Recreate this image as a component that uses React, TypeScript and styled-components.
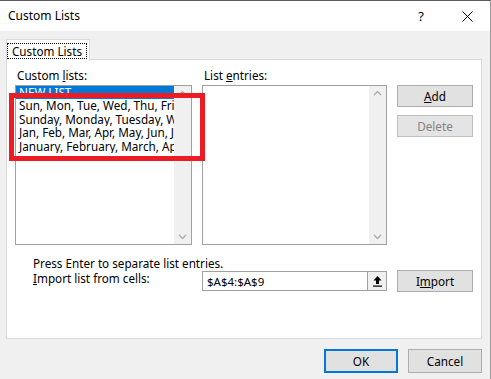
import styled, { createGlobalStyle } from "styled-components";

const Global = createGlobalStyle`
	html, body {
		margin: 0;
		padding: 0;
		background: #f0f0f0;
	}
	body {
		font-family: "Noto Sans", "Open Sans", sans-serif;
		font-size: 11.7px;
		color: #000;
	}
`;

const Window = styled.div`
	position: relative;
	width: 491px;
	height: 379px;
	box-sizing: border-box;
	border-top: 1px solid #5b5b5b;
	border-right: 1px solid #9a9a9a;
	background: #f0f0f0;
	display: flex;
	flex-direction: column;
	overflow: hidden;
`;

const TitleBar = styled.div`
	flex: 0 0 30px;
	background: #fff;
	display: flex;
	align-items: center;
	padding-left: 8px;
`;

const Title = styled.div`
	flex: 1;
	font-size: 12px;
	padding-bottom: 2px;
`;

const TitleButton = styled.div`
	width: 46px;
	height: 30px;
	display: flex;
	align-items: center;
	justify-content: center;
	font-size: 13px;
`;

const Body = styled.div`
	flex: 1;
	display: flex;
	flex-direction: column;
	padding: 7px 8px 0 6px;
`;

const TabStrip = styled.div`
	display: flex;
	height: 21px;
`;

const Tab = styled.div`
	width: 84px;
	box-sizing: border-box;
	background: #fff;
	border: 1px solid #d9d9d9;
	border-bottom: none;
	position: relative;
	top: 1px;
	height: 22px;
	display: flex;
	align-items: center;
	justify-content: center;
	white-space: nowrap;
`;

const FocusRect = styled.span`
	border: 1px dotted #000;
	padding: 0 4px;
	line-height: 14px;
	margin-right: 2px;
`;

const Panel = styled.div`
	height: 280px;
	box-sizing: border-box;
	background: #fff;
	border: 1px solid #d9d9d9;
	padding: 7px 0 0 8px;
	display: grid;
	grid-template-columns: 177px 185px 76px;
	grid-template-rows: 16px 160px 16px 22px;
	column-gap: 10px;
	row-gap: 2px;
	align-content: start;
`;

const Label = styled.div`
	line-height: 16px;
	padding-left: 2px;
	white-space: nowrap;
`;

const ListBox = styled.div`
	border: 1px solid #a0a0a0;
	display: flex;
	overflow: hidden;
`;

const ListItems = styled.div`
	flex: 1;
	min-width: 0;
	overflow: hidden;
`;

const ListItem = styled.div<{ $selected?: boolean }>`
	line-height: 13.4px;
	padding-left: 3px;
	white-space: nowrap;
	overflow: hidden;
	background: ${(p) => (p.$selected ? "#0078d7" : "transparent")};
	color: ${(p) => (p.$selected ? "#fff" : "#000")};
`;

const ScrollBar = styled.div`
	flex: 0 0 17px;
	background: #f0f0f0;
	display: flex;
	flex-direction: column;
	justify-content: space-between;
	align-items: center;
	padding: 4px 0;
`;

const ButtonColumn = styled.div`
	display: flex;
	flex-direction: column;
	gap: 8px;
`;

const Button = styled.div<{ $disabled?: boolean; $default?: boolean }>`
	box-sizing: border-box;
	height: ${(p) => (p.$default ? "24px" : "22px")};
	background: ${(p) => (p.$disabled ? "#e4e4e4" : "#e1e1e1")};
	border: ${(p) =>
		p.$default ? "2px solid #0078d7" : `1px solid ${p.$disabled ? "#bfbfbf" : "#adadad"}`};
	color: ${(p) => (p.$disabled ? "#838383" : "#000")};
	display: flex;
	align-items: center;
	justify-content: center;
	padding-bottom: 1px;
`;

const Note = styled.div`
	grid-column: 1 / 4;
	padding-left: 18px;
	line-height: 16px;
	margin-top: 8px;
`;

const ImportLabel = styled.div`
	padding-left: 18px;
	line-height: 16px;
	margin-top: 5px;
`;

const RefInput = styled.div`
	margin-top: 6px;
	height: 20px;
	box-sizing: border-box;
	border: 1px solid #a0a0a0;
	display: flex;
	align-items: center;
`;

const RefText = styled.div`
	flex: 1;
	padding-left: 4px;
	font-size: 11.5px;
`;

const RefButton = styled.div`
	width: 19px;
	height: 18px;
	box-sizing: border-box;
	border-left: 1px solid #a0a0a0;
	background: #f0f0f0;
	display: flex;
	align-items: center;
	justify-content: center;
`;

const ImportButton = styled(Button)`
	margin-top: 5px;
`;

const Footer = styled.div`
	display: flex;
	justify-content: flex-end;
	gap: 10px;
	padding: 10px 0 0 0;
`;

const FooterButton = styled(Button)`
	width: 74px;
	height: 24px;
`;

const Highlight = styled.div`
	position: absolute;
	left: 9px;
	top: 92px;
	width: 196px;
	height: 68px;
	box-sizing: border-box;
	border: 5px solid #ed1c24;
	pointer-events: none;
`;

function Chevron({ up }: { up?: boolean }) {
	return (
		<svg width="9" height="6" viewBox="0 0 9 6">
			<path
				d={up ? "M1 5 L4.5 1.5 L8 5" : "M1 1 L4.5 4.5 L8 1"}
				fill="none"
				stroke="#a6a6a6"
				strokeWidth="1.2"
			/>
		</svg>
	);
}

const customLists = [
	"Sun, Mon, Tue, Wed, Thu, Fri, Sat",
	"Sunday, Monday, Tuesday, Wednesday, Thursday",
	"Jan, Feb, Mar, Apr, May, Jun, Jul, Aug",
	"January, February, March, April, May",
];

export default function App() {
	return (
		<>
			<Global />
			<Window>
				<TitleBar>
					<Title>Custom Lists</Title>
					<TitleButton>?</TitleButton>
					<TitleButton>
						<svg width="11" height="11" viewBox="0 0 11 11">
							<path d="M0.5 0.5 L10.5 10.5 M10.5 0.5 L0.5 10.5" stroke="#000" strokeWidth="1" />
						</svg>
					</TitleButton>
				</TitleBar>
				<Body>
					<TabStrip>
						<Tab>
							<FocusRect>Custom Lists</FocusRect>
						</Tab>
					</TabStrip>
					<Panel>
						<Label>
							Custom <u>l</u>ists:
						</Label>
						<Label>
							List <u>e</u>ntries:
						</Label>
						<div />
						<ListBox>
							<ListItems>
								<ListItem $selected>NEW LIST</ListItem>
								{customLists.map((l) => (
									<ListItem key={l}>{l}</ListItem>
								))}
							</ListItems>
							<ScrollBar>
								<Chevron up />
								<Chevron />
							</ScrollBar>
						</ListBox>
						<ListBox>
							<ListItems />
							<ScrollBar>
								<Chevron up />
								<Chevron />
							</ScrollBar>
						</ListBox>
						<ButtonColumn>
							<Button>
								<u>A</u>dd
							</Button>
							<Button $disabled>Delete</Button>
						</ButtonColumn>
						<Note>Press Enter to separate list entries.</Note>
						<ImportLabel>
							<u>I</u>mport list from cells:
						</ImportLabel>
						<RefInput>
							<RefText>$A$4:$A$9</RefText>
							<RefButton>
								<svg width="11" height="12" viewBox="0 0 11 12">
									<path d="M5.5 1 L1.5 5.5 H4 V9 H7 V5.5 H9.5 Z" fill="#000" />
									<rect x="1" y="10.5" width="9" height="1.2" fill="#000" />
								</svg>
							</RefButton>
						</RefInput>
						<ImportButton>
							I<u>m</u>port
						</ImportButton>
					</Panel>
					<Footer>
						<FooterButton $default>OK</FooterButton>
						<FooterButton>Cancel</FooterButton>
					</Footer>
				</Body>
				<Highlight />
			</Window>
		</>
	);
}
